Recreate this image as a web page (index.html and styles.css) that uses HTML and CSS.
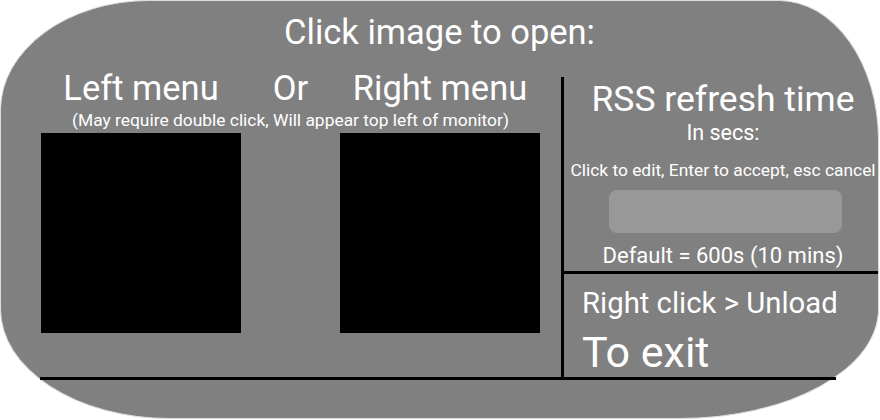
FILE: index.html
```html
<!DOCTYPE html>
<html lang="en">
<head>
<meta charset="utf-8">
<title>RSS Settings</title>
<link rel="stylesheet" href="styles.css">
</head>
<body>
<div class="panel">
  <div class="title">Click image to open:</div>
  <div class="body">
    <div class="menus">
      <div class="menu-head">Left menu</div>
      <div class="menu-head">Or</div>
      <div class="menu-head">Right menu</div>
      <div class="hint">(May require double click, Will appear top left of monitor)</div>
      <div class="thumb"></div>
      <div></div>
      <div class="thumb"></div>
    </div>
    <div class="vline"></div>
    <div class="side">
      <div class="rss">
        <div class="rss-title">RSS refresh time</div>
        <div class="rss-unit">In secs:</div>
        <div class="rss-help">Click to edit, Enter to accept, esc cancel</div>
        <div class="rss-input"></div>
        <div class="rss-default">Default = 600s (10 mins)</div>
      </div>
      <div class="hline"></div>
      <div class="exit">
        <div class="exit-hint">Right click &gt; Unload</div>
        <div class="exit-title">To exit</div>
      </div>
    </div>
  </div>
  <div class="baseline"></div>
</div>
</body>
</html>
```
FILE: styles.css
```css
body {
  margin: 0;
  background: #ffffff;
  font-family: Roboto, "Liberation Sans", sans-serif;
}

.panel {
  box-sizing: border-box;
  width: 879px;
  height: 419px;
  border: 1px solid #dcdcdc;
  border-radius: 150px 100px 200px 170px / 110px 140px 110px 110px;
  background: #808080;
  color: #ffffff;
  padding-top: 11px;
}

.title {
  text-align: center;
  font-size: 34.5px;
  line-height: 40px;
}

.body {
  display: grid;
  grid-template-columns: 520px 3px 1fr;
  margin-top: 16px;
  margin-left: 40px;
  height: 309px;
}

.menus {
  display: grid;
  grid-template-columns: 200px 99px 200px;
  grid-template-rows: 40px 25px 200px;
}

.menu-head {
  justify-self: center;
  white-space: nowrap;
  font-size: 34.5px;
  line-height: 40px;
}

.hint {
  grid-column: 1 / -1;
  text-align: center;
  white-space: nowrap;
  font-size: 17.4px;
  line-height: 25px;
}

.thumb {
  width: 200px;
  height: 200px;
  background: #000000;
}

.vline {
  margin-top: 9px;
  background: #000000;
}

.side {
  display: flex;
  flex-direction: column;
}

.rss {
  height: 203px;
  box-sizing: border-box;
  padding-top: 13px;
  padding-left: 4px;
  text-align: center;
  white-space: nowrap;
}

.rss-title {
  font-size: 35.5px;
  line-height: 36px;
}

.rss-unit {
  margin-top: 6px;
  font-size: 21.5px;
  line-height: 20px;
}

.rss-help {
  margin-top: 17px;
  font-size: 17.4px;
  line-height: 20px;
}

.rss-input {
  width: 233px;
  height: 43px;
  margin: 10px 0 0 41px;
  border-radius: 8px;
  background: #989898;
}

.rss-default {
  margin-top: 11px;
  font-size: 22px;
  line-height: 24px;
}

.hline {
  height: 3px;
  background: #000000;
}

.exit {
  flex: 1;
  padding: 12px 0 0 18px;
  white-space: nowrap;
}

.exit-hint {
  font-size: 29.3px;
  line-height: 34px;
}

.exit-title {
  margin-top: 8px;
  font-size: 43px;
  line-height: 48px;
}

.baseline {
  margin-left: 39px;
  width: 796px;
  height: 3px;
  background: #000000;
}
```
